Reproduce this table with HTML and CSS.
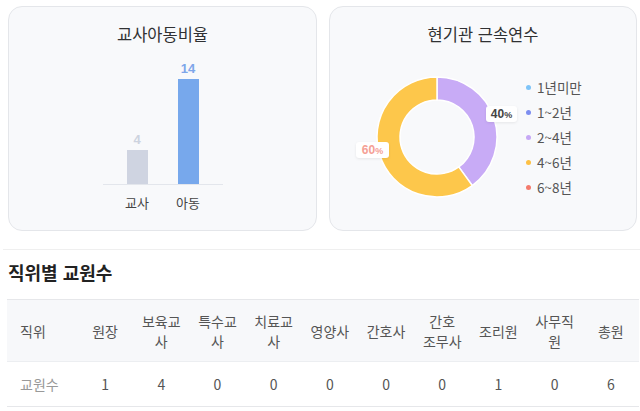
FILE: index.html
```html
<!DOCTYPE html>
<html lang="ko">
<head>
<meta charset="utf-8">
<link rel="stylesheet" href="styles.css">
</head>
<body>
<div class="page">
  <div class="cards">
    <div class="card">
      <div class="card-title">교사아동비율</div>
      <div class="bar-chart">
        <div class="bars">
          <div class="bar-col">
            <div class="bar-val gray">4</div>
            <div class="bar gray" style="height:34px"></div>
          </div>
          <div class="bar-col">
            <div class="bar-val blue">14</div>
            <div class="bar blue" style="height:105px"></div>
          </div>
        </div>
        <div class="bar-labels">
          <div class="bar-label">교사</div>
          <div class="bar-label">아동</div>
        </div>
      </div>
    </div>
    <div class="card">
      <div class="card-title">현기관 근속연수</div>
      <div class="donut-row">
        <div class="donut">
          <svg width="130" height="130" viewBox="0 0 130 130">
            <path d="M65,5 A60,60 0 0 1 100.27,113.54 L86.75,94.93 A37,37 0 0 0 65,28 Z" fill="#c8abf6" stroke="#fff" stroke-width="1.5"/>
            <path d="M100.27,113.54 A60,60 0 1 1 65,5 L65,28 A37,37 0 1 0 86.75,94.93 Z" fill="#fdc74b" stroke="#fff" stroke-width="1.5"/>
          </svg>
          <div class="tag tag-40">40<span class="pct">%</span></div>
          <div class="tag tag-60">60<span class="pct">%</span></div>
        </div>
        <ul class="legend">
          <li><span class="dot c1"></span>1년미만</li>
          <li><span class="dot c2"></span>1~2년</li>
          <li><span class="dot c3"></span>2~4년</li>
          <li><span class="dot c4"></span>4~6년</li>
          <li><span class="dot c5"></span>6~8년</li>
        </ul>
      </div>
    </div>
  </div>
  <div class="divider"></div>
  <h2 class="section-title">직위별 교원수</h2>
  <table class="staff">
    <colgroup>
      <col class="first"><col><col><col><col><col><col><col><col><col><col>
    </colgroup>
    <thead>
      <tr>
        <th class="left">직위</th>
        <th>원장</th>
        <th>보육교<br>사</th>
        <th>특수교<br>사</th>
        <th>치료교<br>사</th>
        <th>영양사</th>
        <th>간호사</th>
        <th>간호<br>조무사</th>
        <th>조리원</th>
        <th>사무직<br>원</th>
        <th>총원</th>
      </tr>
    </thead>
    <tbody>
      <tr>
        <td class="left muted">교원수</td>
        <td>1</td><td>4</td><td>0</td><td>0</td><td>0</td><td>0</td><td>0</td><td>1</td><td>0</td><td>6</td>
      </tr>
    </tbody>
  </table>
</div>
</body>
</html>
```

FILE: styles.css
```css
* { box-sizing: border-box; }
html, body { margin: 0; padding: 0; background: #fff; }
body {
  font-family: "Noto Sans CJK KR", "Noto Sans", sans-serif;
  color: #303133;
  width: 640px;
  overflow: hidden;
}
.page { padding-top: 6px; }
.cards {
  display: flex;
  gap: 12px;
  padding-left: 8px;
}
.card {
  width: 309px;
  height: 225px;
  background: #f8f9fb;
  border: 1px solid #e4e6ea;
  border-radius: 14px;
  padding-top: 16px;
}
.card + .card { width: 308px; }
.card-title {
  text-align: center;
  font-size: 16.5px;
  line-height: 22px;
  color: #303133;
}
.bar-chart {
  width: 120px;
  margin: 18px auto 0;
}
.bars {
  height: 122px;
  display: flex;
  justify-content: center;
  align-items: flex-end;
  border-bottom: 1px solid #e3e6ec;
}
.bar-col {
  width: 51px;
  display: flex;
  flex-direction: column;
  align-items: center;
}
.bar-val {
  font-family: "Liberation Sans", Arial, sans-serif;
  font-weight: bold;
  font-size: 13px;
  line-height: 15px;
  margin-bottom: 3px;
}
.bar-val.gray { color: #cdd3df; }
.bar-val.blue { color: #7ea6ea; }
.bar { width: 21px; }
.bar.gray { background: #cfd4e1; }
.bar.blue { background: #77a8ec; }
.bar-labels {
  display: flex;
  justify-content: center;
  margin-top: 9px;
}
.bar-label {
  width: 51px;
  text-align: center;
  font-size: 13px;
  line-height: 18px;
  color: #444;
}
.donut-row {
  display: flex;
  align-items: center;
  margin-top: 27px;
  padding-left: 42px;
}
.donut {
  position: relative;
  width: 130px;
  height: 130px;
}
.donut svg { display: block; }
.tag {
  position: absolute;
  background: #fff;
  border-radius: 3px;
  box-shadow: 0 1px 3px rgba(0,0,0,0.08);
  font-family: "Liberation Sans", Arial, sans-serif;
  font-weight: bold;
  font-size: 12px;
  line-height: 15px;
  height: 16px;
  text-align: center;
  padding: 1px 0 0;
}
.tag .pct { font-size: 9px; }
.tag-40 { left: 114px; top: 34px; width: 31px; color: #444; }
.tag-60 { left: -16px; top: 70px; width: 33px; color: #f5a095; }
.legend {
  list-style: none;
  margin: 0 0 0 24px;
  padding: 0;
}
.legend li {
  display: flex;
  align-items: center;
  height: 25px;
  font-size: 13.5px;
  color: #555;
}
.dot {
  width: 5px;
  height: 5px;
  border-radius: 50%;
  margin-right: 6px;
}
.c1 { background: #7ec4f8; }
.c2 { background: #7d8ef0; }
.c3 { background: #c6a8f5; }
.c4 { background: #fdc044; }
.c5 { background: #f47b6d; }
.divider {
  height: 1px;
  background: #efefef;
  margin: 18px 0 0 3px;
}
.section-title {
  margin: 11px 0 0 8px;
  font-size: 18px;
  line-height: 22px;
  font-weight: bold;
  color: #222;
}
.staff {
  margin: 16px 0 0 7px;
  width: 632px;
  border-collapse: collapse;
  table-layout: fixed;
}
.staff col { width: 56.2px; }
.staff col.first { width: 70px; }
.staff th, .staff td {
  text-align: center;
  font-weight: normal;
  font-size: 14px;
  line-height: 20px;
  padding: 0 4px;
  color: #555;
}
.staff thead tr {
  background: #f7f8fa;
  height: 62px;
  border-top: 1px solid #e6e7ea;
  border-bottom: 1px solid #eceef1;
}
.staff tbody tr {
  height: 45px;
  border-bottom: 1px solid #e6e7ea;
}
.staff .left { text-align: left; padding-left: 13px; }
.staff .muted { color: #999; }
```
